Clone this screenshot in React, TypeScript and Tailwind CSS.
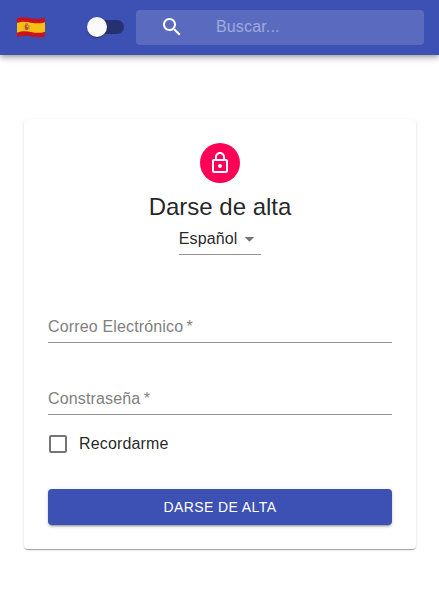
function SpainFlag() {
  return (
    <svg className="-mt-px block h-[21px] w-[28px]" viewBox="0 0 28 22" preserveAspectRatio="none">
      <defs>
        <clipPath id="flag-shape">
          <path d="M0 1.800Q0 1.100 1 .8C5 -.3 9.500 .2 14 1.300S22 2.300 27 .9Q28 .7 28 1.600V19.500Q28 20.300 27.200 20.600C22 21.900 18.500 21.200 14 20.200S5 19.600 1 21Q0 21.300 0 20.300Z" />
        </clipPath>
      </defs>
      <g clipPath="url(#flag-shape)">
        <rect width="28" height="22" fill="#c8121c" />
        <path d="M0 6.200C5 4.300 9.500 4.900 14 5.900S23 7.100 28 5.400V15.400C23 17.300 18.500 16.600 14 15.600S5 14.400 0 16.400Z" fill="#fbbf14" />
        <path d="M6.500 8h.8v6h-.8zM12 8h.8v6H12z" fill="#cfa04a" />
        <path d="M7.800 8.500h3.700v4.200q-1.800 2.300-3.700 0z" fill="#b8552c" />
        <path d="M8.300 6.700h2.700v1.400H8.300z" fill="#a5672d" />
        <path d="M9.700 8.800h1.300v1.600H9.700z" fill="#d9a19a" />
      </g>
    </svg>
  );
}

function TextField({ label, type }: { label: string; type: string }) {
  return (
    <div className="flex h-12 items-end border-b border-[#949494] pb-1.5">
      <input
        type={type}
        aria-label={label}
        placeholder={`${label}\u2009*`}
        className="h-[19px] w-full bg-transparent tracking-[0.15px] text-black/87 outline-none placeholder:text-[#808080] placeholder:opacity-100"
      />
    </div>
  );
}

export default function App() {
  return (
    <div className="min-h-screen bg-white font-['Liberation_Sans',Arial,sans-serif] text-base text-black/87">
      <header className="flex h-[55px] items-center bg-[#3d50b4] pr-[15px] pl-[17px] shadow-[0_2px_4px_-1px_rgba(0,0,0,0.2),0_4px_5px_0_rgba(0,0,0,0.14),0_1px_10px_0_rgba(0,0,0,0.12)]">
        <SpainFlag />
        <button aria-label="Tema" className="-mt-px ml-[45px] flex h-[14px] w-[34px] items-center rounded-full bg-[#263170]">
          <span className="-ml-[3px] size-5 shrink-0 rounded-full bg-[#fafafa] shadow-[0_2px_1px_-1px_rgba(0,0,0,0.2),0_1px_1px_0_rgba(0,0,0,0.14),0_1px_3px_0_rgba(0,0,0,0.12)]" />
        </button>
        <div className="ml-3 flex h-[35px] flex-1 items-center rounded bg-white/15 pl-6">
          <svg className="-mt-0.5 size-6 fill-white" viewBox="0 0 24 24">
            <path d="M15.5 14h-.79l-.28-.27C15.41 12.590 16 11.110 16 9.500 16 5.910 13.090 3 9.500 3S3 5.910 3 9.500 5.910 16 9.500 16c1.610 0 3.090-.59 4.230-1.570l.27.28v.79l5 4.990L20.490 19l-4.990-5zm-6 0C7.010 14 5 11.990 5 9.500S7.010 5 9.500 5 14 7.010 14 9.500 11.990 14 9.500 14z" />
          </svg>
          <input
            aria-label="Buscar"
            placeholder="Buscar..."
            className="-mt-0.5 ml-8 h-[19px] w-40 bg-transparent tracking-[0.15px] text-white outline-none placeholder:text-white/42 placeholder:opacity-100"
          />
        </div>
      </header>

      <main className="mt-16 mr-[23px] ml-6 rounded bg-white p-6 shadow-[0_2px_1px_-1px_rgba(0,0,0,0.2),0_1px_1px_0_rgba(0,0,0,0.14),0_1px_3px_0_rgba(0,0,0,0.12)]">
        <div className="flex flex-col items-center">
          <div className="flex size-10 items-center justify-center rounded-full bg-[#ff0057]">
            <svg className="size-6 fill-white" viewBox="0 0 24 24">
              <path d="M12 17c1.100 0 2-.9 2-2s-.9-2-2-2-2 .9-2 2 .9 2 2 2zm6-9h-1V6c0-2.760-2.240-5-5-5S7 3.240 7 6v2H6c-1.100 0-2 .9-2 2v10c0 1.100.9 2 2 2h12c1.100 0 2-.9 2-2V10c0-1.100-.9-2-2-2zM8.900 6c0-1.710 1.390-3.100 3.100-3.100s3.100 1.390 3.100 3.100v2H8.900V6zM18 20H6V10h12v10z" />
            </svg>
          </div>
          <h1 className="mt-2 text-2xl leading-8">Darse de alta</h1>
          <button className="flex h-8 w-[82.6px] items-center justify-between border-b border-[#949494]">
            <span className="leading-[19px] tracking-[0.15px]">Español</span>
            <svg className="mr-[0.8px] size-6 fill-[#757575]" viewBox="0 0 24 24">
              <path d="M7 10l5 5 5-5z" />
            </svg>
          </button>
        </div>

        <form className="mt-10">
          <TextField label="Correo Electrónico" type="email" />
          <div className="mt-6">
            <TextField label="Constraseña" type="password" />
          </div>
          <label className="mt-[17px] flex h-6 items-center tracking-[0.15px]">
            <svg className="-ml-0.5 size-6 fill-[#757575]" viewBox="0 0 24 24">
              <path d="M19 5v14H5V5h14m0-2H5c-1.100 0-2 .9-2 2v14c0 1.100.9 2 2 2h14c1.100 0 2-.9 2-2V5c0-1.100-.9-2-2-2z" />
            </svg>
            <span className="ml-[9px]">Recordarme</span>
          </label>
          <button
            type="button"
            className="mt-[33px] block h-9 w-full rounded bg-[#3d50b4] text-sm tracking-[0.4px] text-white shadow-[0_3px_1px_-2px_rgba(0,0,0,0.2),0_2px_2px_0_rgba(0,0,0,0.14),0_1px_5px_0_rgba(0,0,0,0.12)]"
          >
            DARSE DE ALTA
          </button>
        </form>
      </main>
    </div>
  );
}
